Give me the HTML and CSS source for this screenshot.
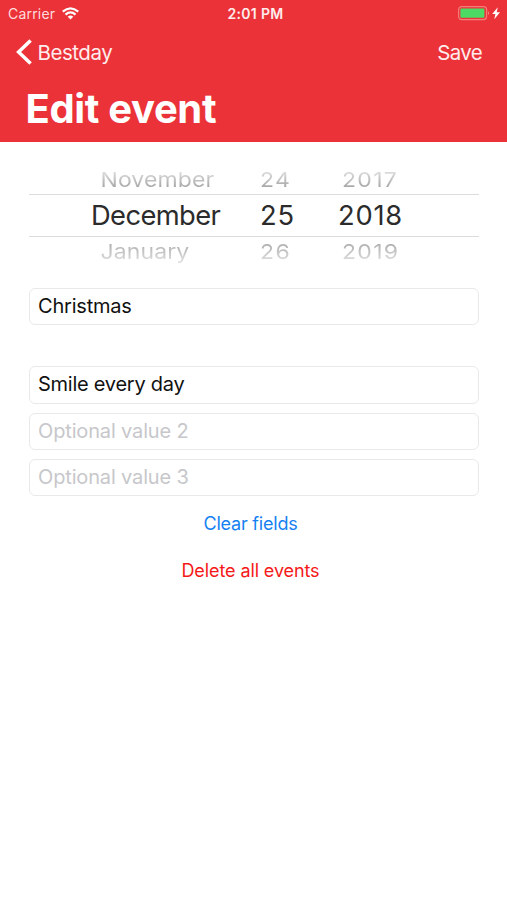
FILE: index.html
```html
<!DOCTYPE html>
<html lang="en">
<head>
<meta charset="utf-8">
<title>Edit event</title>
<link rel="stylesheet" href="styles.css">
</head>
<body>
<header class="header">
  <div class="status">
    <div class="status-left"><span class="carrier">Carrier</span>
      <svg class="wifi" width="17" height="13" viewBox="0 0 17 13" fill="none" stroke="#fff" stroke-width="2.2"><path d="M.8 4.7Q8.5-2 16.2 4.7M3.5 7.6Q8.5 3.3 13.5 7.6"/><path d="M5.7 9.8Q8.5 7.4 11.3 9.8L8.5 12.6Z" fill="#fff" stroke="none"/></svg>
    </div>
    <span class="clock">2:01 PM</span>
    <div class="status-right">
      <svg width="43" height="15" viewBox="0 0 43 15"><rect x=".6" y=".6" width="28" height="13" rx="3" fill="none" stroke="#f37b78" stroke-width="1.2"/><rect x="2.4" y="2.4" width="24" height="9.4" rx="1" fill="#4cd964"/><path d="M30 5Q32.3 7.1 30 9.2Z" fill="#f37b78"/><path d="M39.8 1.2L34.2 8H37.4L36.3 13.2L42 6.3H38.7Z" fill="#fff"/></svg>
    </div>
  </div>
  <nav class="nav">
    <a class="back"><svg width="16" height="26" viewBox="0 0 16 26"><path d="M14.6 1.5L2.6 13L14.6 24.5" fill="none" stroke="#fff" stroke-width="3.5"/></svg><span>Bestday</span></a>
    <a class="save">Save</a>
  </nav>
  <h1>Edit event</h1>
</header>
<main>
  <section class="picker">
    <div class="row prev"><span class="month">November</span><span class="day">24</span><span class="year">2017</span></div>
    <div class="row current"><span class="month">December</span><span class="day">25</span><span class="year">2018</span></div>
    <div class="row next"><span class="month">January</span><span class="day">26</span><span class="year">2019</span></div>
  </section>
  <form class="fields">
    <div class="field title-field">Christmas</div>
    <div class="field">Smile every day</div>
    <div class="field placeholder">Optional value 2</div>
    <div class="field placeholder">Optional value 3</div>
  </form>
  <div class="actions"><a class="clear">Clear fields</a><a class="delete">Delete all events</a></div>
</main>
</body>
</html>
```

FILE: styles.css
```css
* { box-sizing: border-box; }
body { margin: 0; background: #fff; color: #111; font-family: Inter, "Liberation Sans", sans-serif; }
.header { height: 142.4px; background: #eb3239; color: #fff; }
.status { height: 27px; display: grid; grid-template-columns: 1fr auto 1fr; align-items: center; padding: 0 6px 0 8px; font-size: 14px; }
.status-left { display: flex; align-items: center; gap: 7px; }
.carrier { color: #ffdcdc; letter-spacing: .2px; }
.clock { font-weight: 600; font-size: 14px; color: #ffecec; letter-spacing: .3px; margin-left: 2px; }
.status-right { display: flex; justify-content: flex-end; }
.nav { height: 50px; display: flex; justify-content: space-between; align-items: center; padding: 0 25px 0 16px; font-size: 20.5px; letter-spacing: -.47px; color: #ffecec; }
.nav span, .save { line-height: 26px; padding-top: 2px; }
.back { display: flex; align-items: center; gap: 5.5px; }
.save { letter-spacing: -.7px; }
h1 { margin: 7px 0 0 25.5px; font-size: 40px; line-height: 50px; font-weight: 700; letter-spacing: -.35px; }
.picker { margin: 23px 28px 0 29px; height: 101px; color: #2b2b2b; overflow: hidden; display: grid; grid-template-rows: 29px 43px 29px; }
.row { display: grid; grid-template-columns: 200px 75px 125px; align-items: center; font-size: 27.3px; letter-spacing: -.6px; line-height: 30px; }
.month { padding-left: 62px; }
.day { padding-left: 31px; }
.year { padding-left: 34px; }
.current { border: solid #dcdcdc; border-width: 1px 0; }
.current .day, .current .year { letter-spacing: .8px; }
.prev, .next { font-size: 23px; letter-spacing: .1px; }
.prev .month, .next .month { padding-left: 71.5px; }
.prev .year, .next .year { padding-left: 38px; letter-spacing: 1.3px; }
.prev .day, .next .day { letter-spacing: 1.4px; }
.prev > span, .next > span { color: transparent; background-clip: text; transform: scaleY(.9); }
.prev > span { background-image: linear-gradient(#ddd 20%, #a8a8a8 75%); }
.next > span { background-image: linear-gradient(#b0b0b0 20%, #dedede 85%); }
.fields { margin: 21.6px 28px 0 29px; display: grid; gap: 9px; }
.field { height: 37.3px; border: 1px solid #e9e9e9; border-radius: 6px; padding: 0 8px; font-size: 20px; line-height: 34px; letter-spacing: -.25px; }
.title-field { margin-bottom: 32px; letter-spacing: -.2px; }
.placeholder { color: #c7c7cb; letter-spacing: -.15px; }
.actions { display: flex; flex-direction: column; align-items: center; margin: 16px 6px 0 0; font-size: 18px; line-height: 24px; gap: 22.5px; letter-spacing: -.1px; }
.clear { color: #1681f0; letter-spacing: -.2px; }
.delete { color: #f51818; }
```
